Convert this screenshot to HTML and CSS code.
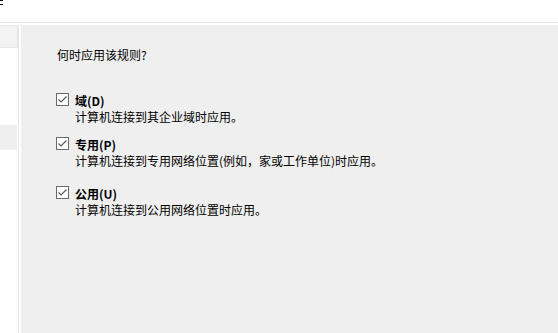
FILE: index.html
```html
<!DOCTYPE html>
<html lang="zh-CN">
<head>
<meta charset="utf-8">
<title>何时应用该规则</title>
<link rel="stylesheet" href="styles.css">
</head>
<body>
<div class="topbar"><div class="mark"></div></div>
<div class="divider"></div>
<div class="content">
  <div class="sidebar">
    <div class="side-head"></div>
    <div class="side-gap"></div>
    <div class="side-row"></div>
  </div>
  <div class="panel">
    <div class="question">何时应用该规则?</div>
    <div class="option opt-1">
      <span class="box"><svg viewBox="0 0 13 13" width="13" height="13"><path d="M2.5 6.5 L5 9 L10.5 3.5" fill="none" stroke="#5a5a5a" stroke-width="1.2"/></svg></span>
      <div class="text">
        <div class="label">域(D)</div>
        <div class="desc">计算机连接到其企业域时应用。</div>
      </div>
    </div>
    <div class="option opt-2">
      <span class="box"><svg viewBox="0 0 13 13" width="13" height="13"><path d="M2.5 6.5 L5 9 L10.5 3.5" fill="none" stroke="#5a5a5a" stroke-width="1.2"/></svg></span>
      <div class="text">
        <div class="label">专用(P)</div>
        <div class="desc">计算机连接到专用网络位置(例如，家或工作单位)时应用。</div>
      </div>
    </div>
    <div class="option opt-3">
      <span class="box"><svg viewBox="0 0 13 13" width="13" height="13"><path d="M2.5 6.5 L5 9 L10.5 3.5" fill="none" stroke="#5a5a5a" stroke-width="1.2"/></svg></span>
      <div class="text">
        <div class="label">公用(U)</div>
        <div class="desc">计算机连接到公用网络位置时应用。</div>
      </div>
    </div>
  </div>
</div>
</body>
</html>
```
FILE: styles.css
```css
html, body {
  margin: 0;
  padding: 0;
  background: #ffffff;
  width: 558px;
  height: 333px;
  overflow: hidden;
  font-family: "Noto Sans CJK SC", "Noto Sans", sans-serif;
  font-size: 12px;
  color: #000000;
}

.topbar {
  height: 22px;
  background: #ffffff;
}

.mark {
  width: 3px;
  height: 3px;
  border-top: 1px solid #000;
  border-bottom: 1px solid #000;
}

.divider {
  height: 1px;
  background: #e3e3e3;
  margin-bottom: 2px;
}

.content {
  display: flex;
  height: 308px;
}

.sidebar {
  width: 18px;
  border-right: 1px solid #e6e6e6;
  margin-right: 2px;
  display: flex;
  flex-direction: column;
}

.side-head {
  height: 21px;
  background: #f3f3f3;
  border: 1px solid #e6e6e6;
  border-left: none;
}

.side-gap {
  height: 77px;
}

.side-row {
  height: 25px;
  width: 17px;
  background: #efefef;
}

.panel {
  flex: 1;
  background: #efefef;
  padding: 22px 0 0 35px;
}

.question {
  line-height: 16px;
  margin-left: 1px;
}

.option {
  display: flex;
  align-items: flex-start;
}

.opt-1 { margin-top: 29px; }
.opt-2 { margin-top: 11px; }
.opt-3 { margin-top: 16px; }

.box {
  width: 11px;
  height: 11px;
  border: 1px solid #6a6a6a;
  background: #ffffff;
  margin-top: 1px;
  margin-right: 6px;
  position: relative;
  flex: none;
}

.box svg {
  position: absolute;
  left: -1px;
  top: -1px;
}

.label {
  font-weight: 700;
  line-height: 17px;
}

.desc {
  line-height: 16px;
}
```
